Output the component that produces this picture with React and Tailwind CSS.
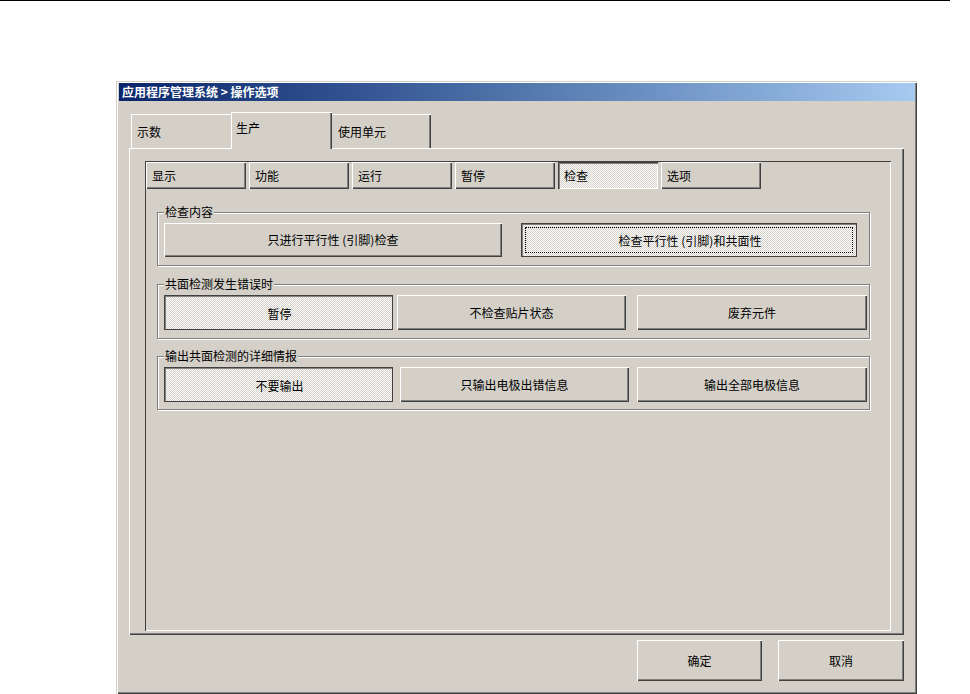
import React from 'react'

const raised =
  'shadow-[inset_1px_1px_0_#fff,inset_-1px_-1px_0_#404040,inset_-2px_-2px_0_#808080]'
const pressed =
  'shadow-[inset_0_0_0_1px_#404040,inset_1px_1px_0_1px_#808080] bg-[image:repeating-conic-gradient(#fff_0_25%,#d4d0c8_0_50%)] bg-[length:2px_2px]'
const sunkenTab =
  'shadow-[inset_1px_1px_0_#404040,inset_2px_2px_0_#808080,inset_-1px_-1px_0_#fff] bg-[image:repeating-conic-gradient(#fff_0_25%,#d4d0c8_0_50%)] bg-[length:2px_2px]'

function Btn({ label, w, h, on, focus, className = '' }) {
  return (
    <div
      className={`relative flex items-center justify-center shrink-0 ${on ? pressed : raised} ${className}`}
      style={{ width: w, height: h }}
    >
      {focus && <div className="absolute inset-[4px] border border-dotted border-black" />}
      <span className={on ? 'translate-x-px translate-y-px' : ''}>{label}</span>
    </div>
  )
}

function Group({ label, h, children, className = '' }) {
  return (
    <div
      className={`relative w-[713px] border border-[#808080] shadow-[inset_1px_1px_0_#fff,1px_1px_0_#fff] pt-[10px] pl-[6px] ${className}`}
      style={{ height: h }}
    >
      <span className="absolute left-[6px] top-[-8px] px-px bg-[#d4d0c8] leading-[14px]">{label}</span>
      <div className="flex">{children}</div>
    </div>
  )
}

const subTabs = ['显示', '功能', '运行', '暂停', '检查', '选项']

export default function App() {
  return (
    <div className="min-h-screen bg-white text-[12px] text-black font-['Noto_Sans_CJK_SC','Liberation_Sans',sans-serif]">
      <div className="h-px w-[950px] bg-black" />
      <div className="ml-[116px] mt-[80px] w-[801px] h-[613px] bg-[#d4d0c8] pt-[2px] pl-[3px] pr-[2px] shadow-[inset_1px_1px_0_#d4d0c8,inset_2px_2px_0_#fff,inset_-1px_-1px_0_#404040,inset_-2px_-2px_0_#808080]">
        <div className="h-[18px] flex items-center pl-[3px] bg-gradient-to-r from-[#0a246a] to-[#a6caf0] text-white font-bold leading-none">
          应用程序管理系统 &gt; 操作选项
        </div>

        <div className="pl-[10px] mt-[11px]">
          <div className="flex items-end h-[36px] pl-[2px]">
            <div className="w-[100px] h-[34px] pl-[6px] pt-[11px] leading-[14px] shadow-[inset_1px_1px_0_#fff]">示数</div>
            <div className="relative z-10 w-[101px] h-[37px] -mb-px pl-[5px] pt-[9px] leading-[14px] bg-[#d4d0c8] shadow-[inset_1px_1px_0_#fff,inset_-1px_0_0_#404040,inset_-2px_0_0_#808080]">
              生产
            </div>
            <div className="w-[99px] h-[34px] pl-[6px] pt-[11px] leading-[14px] shadow-[inset_0_1px_0_#fff,inset_-1px_0_0_#404040,inset_-2px_0_0_#808080]">
              使用单元
            </div>
          </div>

          <div className={`w-[775px] h-[487px] pt-[13px] pl-[16px] ${raised}`}>
            <div className="w-[746px] h-[470px] p-px shadow-[inset_1px_1px_0_#404040,inset_-1px_-1px_0_#fff]">
              <div className="flex gap-[3px]">
                {subTabs.map((t) => (
                  <div
                    key={t}
                    className={`w-[100px] h-[27px] flex items-center pl-[6px] ${t === '检查' ? sunkenTab : raised}`}
                  >
                    {t}
                  </div>
                ))}
              </div>

              <div className="pl-[11px] pt-[23px]">
                <Group label="检查内容" h={54}>
                  <Btn label="只进行平行性 (引脚)检查" w={338} h={34} />
                  <Btn label="检查平行性 (引脚)和共面性" w={336} h={34} on focus className="ml-[19px]" />
                </Group>

                <Group label="共面检测发生错误时" h={55} className="mt-[18px]">
                  <Btn label="暂停" w={229} h={35} on />
                  <Btn label="不检查贴片状态" w={229} h={35} className="ml-[4px]" />
                  <Btn label="废弃元件" w={230} h={35} className="ml-[11px]" />
                </Group>

                <Group label="输出共面检测的详细情报" h={54} className="mt-[17px]">
                  <Btn label="不要输出" w={229} h={35} on />
                  <Btn label="只输出电极出错信息" w={229} h={35} className="ml-[7px]" />
                  <Btn label="输出全部电极信息" w={230} h={35} className="ml-[8px]" />
                </Group>
              </div>
            </div>
          </div>

          <div className="w-[775px] flex justify-end gap-[16px] mt-[5px]">
            <Btn label="确定" w={125} h={41} />
            <Btn label="取消" w={126} h={41} />
          </div>
        </div>
      </div>
    </div>
  )
}
